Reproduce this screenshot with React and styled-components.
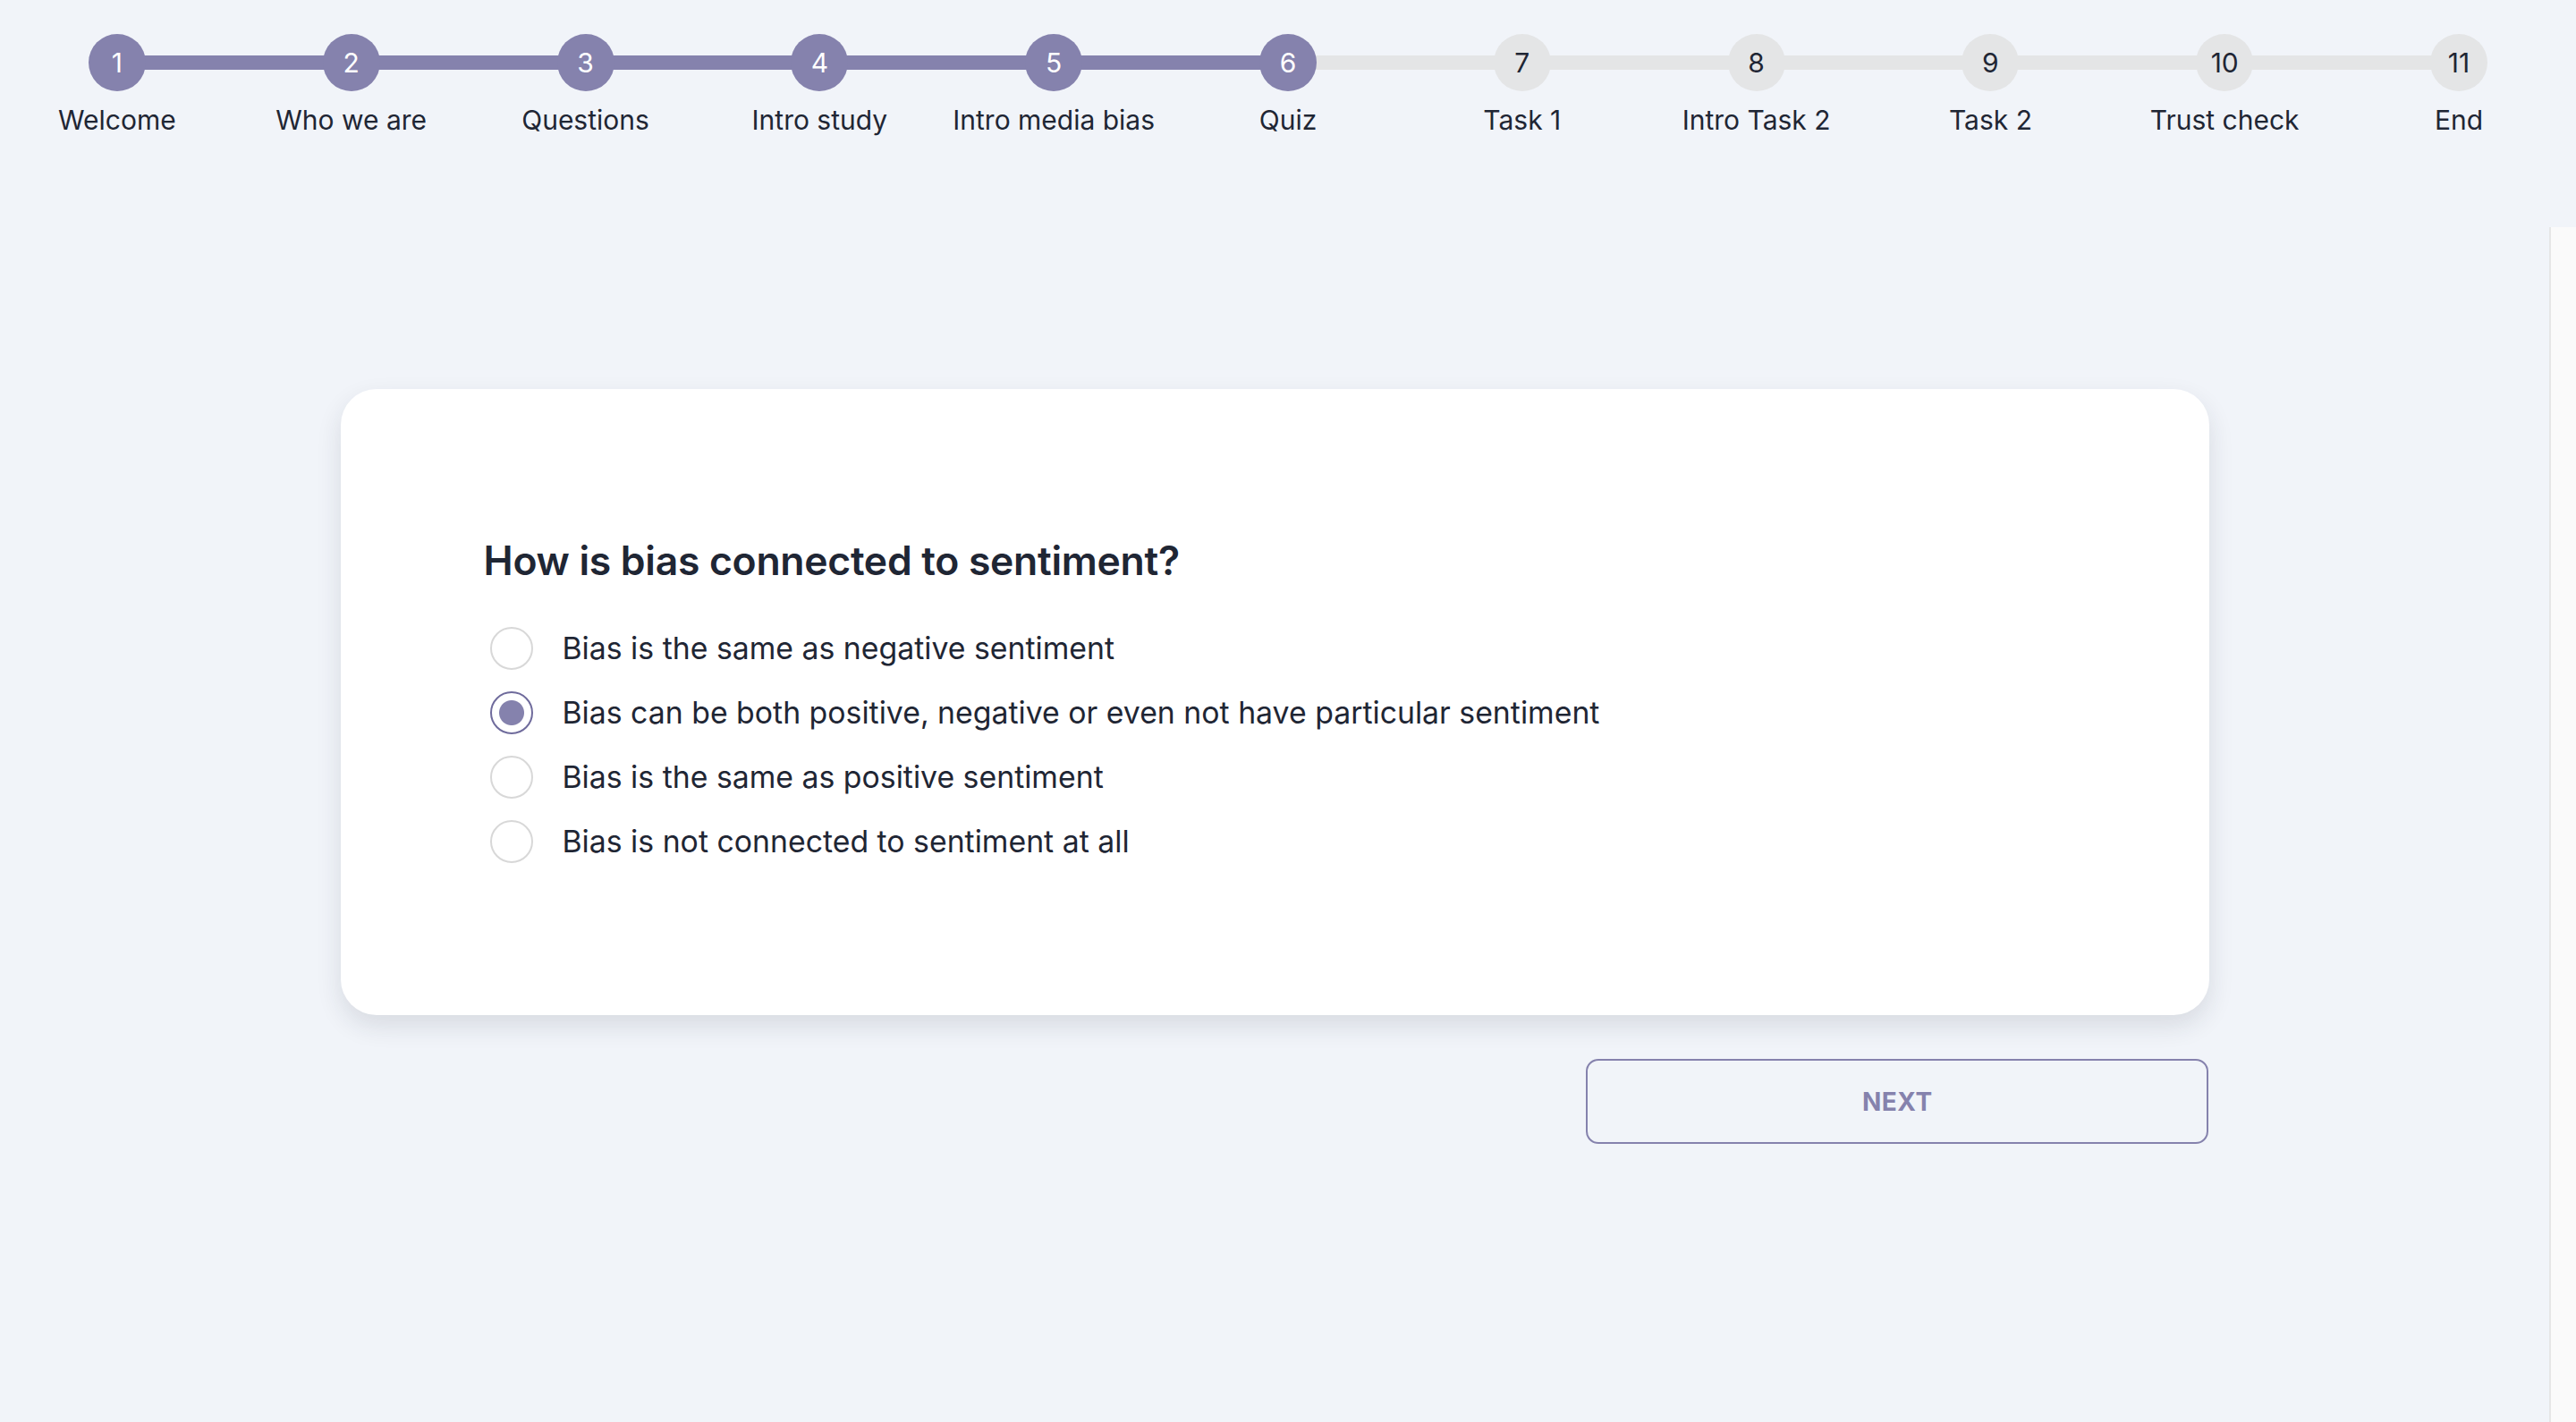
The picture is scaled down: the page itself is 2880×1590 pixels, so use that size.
import styled, { createGlobalStyle } from 'styled-components';
import { useState } from 'react';

const steps = [
    'Welcome',
    'Who we are',
    'Questions',
    'Intro study',
    'Intro media bias',
    'Quiz',
    'Task 1',
    'Intro Task 2',
    'Task 2',
    'Trust check',
    'End',
];

const options = [
    'Bias is the same as negative sentiment',
    'Bias can be both positive, negative or even not have particular sentiment',
    'Bias is the same as positive sentiment',
    'Bias is not connected to sentiment at all',
];

const ACTIVE_STEP = 5;

export default function App() {
    const [answer, setAnswer] = useState(1);

    return (
        <>
            <GlobalStyle />
            <Page>
                <Stepper>
                    {steps.map((label, i) => (
                        <Step key={label} first={i === 0} done={i <= ACTIVE_STEP}>
                            <StepCircle done={i <= ACTIVE_STEP}>{i + 1}</StepCircle>
                            <StepLabel>{label}</StepLabel>
                        </Step>
                    ))}
                </Stepper>

                <Main>
                    <Scroller>
                        <Content>
                            <Card>
                                <Question>How is bias connected to sentiment?</Question>
                                <OptionList>
                                    {options.map((text, i) => (
                                        <Option key={text} onClick={() => setAnswer(i)}>
                                            <Radio checked={answer === i} />
                                            <OptionText>{text}</OptionText>
                                        </Option>
                                    ))}
                                </OptionList>
                            </Card>
                            <Actions>
                                <NextButton>Next</NextButton>
                            </Actions>
                        </Content>
                    </Scroller>
                    <ScrollTrack />
                </Main>
            </Page>
        </>
    );
}

const GlobalStyle = createGlobalStyle`
    html, body {
        margin: 0;
        padding: 0;
        background: #f1f4f9;
        font-family: Inter, "Noto Sans", sans-serif;
        color: #1f2634;
        overflow: hidden;
    }
`;

const Page = styled.div`
    display: flex;
    flex-direction: column;
    height: 100vh;
    background: #f1f4f9;
`;

const Stepper = styled.div`
    display: flex;
    height: 254px;
    padding-top: 38px;
    box-sizing: border-box;
    flex-shrink: 0;
`;

const Step = styled.div`
    flex: 1;
    position: relative;
    display: flex;
    flex-direction: column;
    align-items: center;

    &::before {
        content: '';
        display: ${p => (p.first ? 'none' : 'block')};
        position: absolute;
        top: 24px;
        left: -50%;
        right: 50%;
        height: 16px;
        background: ${p => (p.done ? '#8582ad' : '#e4e5e6')};
    }
`;

const StepCircle = styled.div`
    position: relative;
    z-index: 1;
    width: 64px;
    height: 64px;
    border-radius: 50%;
    display: flex;
    align-items: center;
    justify-content: center;
    font-size: 30px;
    background: ${p => (p.done ? '#8582ad' : '#e4e5e6')};
    color: ${p => (p.done ? '#ffffff' : '#1f2634')};
`;

const StepLabel = styled.div`
    margin-top: 14px;
    font-size: 30px;
    line-height: 36px;
    color: #1f2634;
    white-space: nowrap;
`;

const Main = styled.main`
    flex: 1;
    display: flex;
    min-height: 0;
`;

const Scroller = styled.div`
    flex: 1;
    overflow: hidden;
`;

const ScrollTrack = styled.div`
    width: 28px;
    flex-shrink: 0;
    background: #fafafa;
    border-left: 2px solid #e6e6e6;
`;

const Content = styled.div`
    width: 2089px;
    margin: 0 auto;
    padding: 181px 0 120px;
`;

const Card = styled.section`
    background: #ffffff;
    border-radius: 40px;
    box-shadow: 0 12px 28px rgba(30, 40, 60, 0.12);
    padding: 164px 160px 156px;
    height: 700px;
    box-sizing: border-box;
`;

const Question = styled.h2`
    margin: 0 0 46px;
    font-size: 44.5px;
    line-height: 56px;
    font-weight: 600;
    color: #1f2634;
    letter-spacing: -0.3px;
`;

const OptionList = styled.div`
    display: flex;
    flex-direction: column;
    gap: 24px;
`;

const Option = styled.label`
    display: flex;
    align-items: center;
    gap: 33px;
    padding-left: 7px;
    cursor: pointer;
`;

const Radio = styled.span`
    width: 48px;
    height: 48px;
    box-sizing: border-box;
    border-radius: 50%;
    flex-shrink: 0;
    border: ${p => (p.checked ? '2px solid #6f6b9c' : '2px solid #d8d8d8')};
    background: ${p =>
        p.checked ? 'radial-gradient(circle, #8582ad 0 13.5px, #ffffff 14.5px)' : '#ffffff'};
`;

const OptionText = styled.span`
    font-size: 33.8px;
    line-height: 48px;
    color: #1f2634;
`;

const Actions = styled.div`
    display: grid;
    grid-template-columns: repeat(3, 1fr);
    margin-top: 49px;
`;

const NextButton = styled.button`
    grid-column: 3;
    height: 95px;
    border: 2px solid #8582ad;
    border-radius: 14px;
    background: transparent;
    color: #8582ad;
    font-family: Inter, "Noto Sans", sans-serif;
    font-size: 28px;
    font-weight: 700;
    text-transform: uppercase;
    letter-spacing: 0.5px;
    cursor: pointer;
`;
